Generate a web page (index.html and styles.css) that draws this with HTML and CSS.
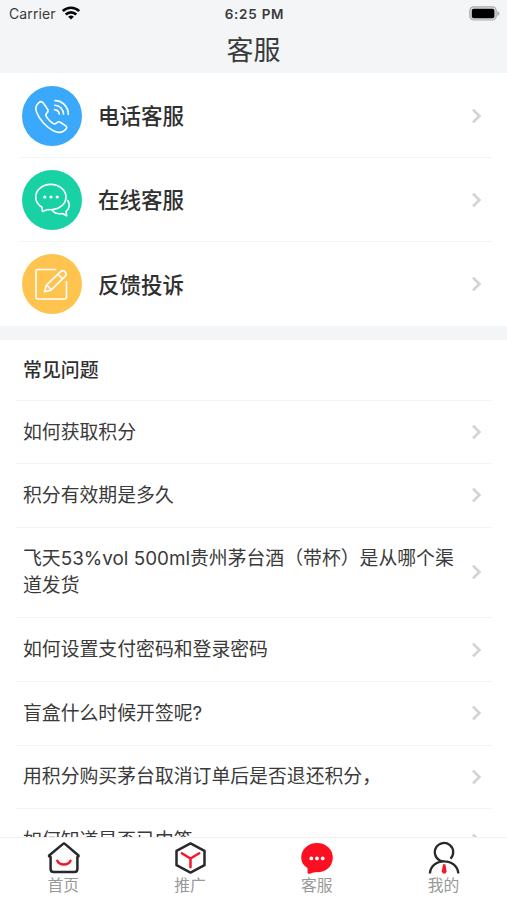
FILE: index.html
```html
<!DOCTYPE html>
<html lang="zh-CN">
<head>
<meta charset="utf-8">
<meta name="viewport" content="width=device-width, initial-scale=1">
<title>客服</title>
<link rel="stylesheet" href="styles.css">
</head>
<body>
<svg width="0" height="0" class="defs">
  <symbol id="chevron" viewBox="0 0 10 16"><path d="M1 1.600 7.400 8 1 14.400" fill="none" stroke="#d3d3d3" stroke-width="2.700"/></symbol>
</svg>
<div class="app">
  <header class="header">
    <div class="status">
      <div class="carrier"><span>Carrier</span>
        <svg class="wifi" viewBox="0 0 18 14" fill="none" stroke="#080808" stroke-width="2.600"><path d="M.8 5.100a11.700 11.700 0 0 1 16.400 0"/><path d="M3.700 8.500a7.600 7.600 0 0 1 10.600 0"/><path d="M9 13.600 6.100 10.800a4.200 4.200 0 0 1 5.800 0z" fill="#080808" stroke="none"/></svg>
      </div>
      <time class="time">6:25 PM</time>
      <svg class="battery" viewBox="0 0 31 15"><rect x=".8" y=".8" width="26.400" height="13.200" rx="3.800" fill="#d8d9da" stroke="#adadae" stroke-width="1.200"/><rect x="2.800" y="2.700" width="22.600" height="9.500" rx="2" fill="#000"/><path d="M28.400 5v5q2-.8 2-2.500T28.400 5" fill="#aaa"/></svg>
    </div>
    <h1 class="title">客服</h1>
  </header>
  <main class="content">
    <section class="services">
      <a class="service">
        <span class="badge blue"><svg viewBox="0 0 60 60"><path d="M17 16.600c1.600-1.500 3-1.300 4.200.3l4.400 6.300c1 1.600.5 2.800-1 4.100-1.300 1.200-1 2.300.4 4.300 2 2.800 4 4.600 6 5.800 1.800 1 2.900.5 3.900-.6 1.100-1.400 2.300-1.300 3.800-.3l5.100 3.400c1.200.9 1.200 2 .2 3.100-3 3.600-7.500 4.300-12.600 1.700C24.500 41.300 17.500 34 14.500 26c-1.500-4.100-.5-7 2.500-9.400z"/><path d="M33 14.600c7.500.1 13.200 6 13.300 13.800M32.800 19.200c5 .3 8.600 4 8.800 9M32.500 23.600c2.700.3 4.500 2 4.800 4.600"/></svg></span>
        <span class="name">电话客服</span><svg class="chevron"><use href="#chevron"/></svg>
      </a>
      <a class="service">
        <span class="badge green"><svg viewBox="0 0 60 60"><path d="M20.500 41.400 20 37.300C16 34.900 13.700 31.300 13.700 27c0-7 6.600-12.600 15-12.600S44 20 44 27s-6.700 12.700-15.300 12.700l-2.700-.2z"/><path d="M45.800 30.500c2.200 3.600 1.700 8-1.800 11.200l.7 4-4.200-2.200c-4.100.8-7.900-.2-10.100-2.900"/><g fill="#fff" stroke="none"><circle cx="22.800" cy="27" r="1.600"/><circle cx="29" cy="27" r="1.600"/><circle cx="35.200" cy="27" r="1.600"/></g></svg></span>
        <span class="name">在线客服</span><svg class="chevron"><use href="#chevron"/></svg>
      </a>
      <a class="service">
        <span class="badge yellow"><svg viewBox="0 0 60 60"><path d="M33.500 15.500H16q-2 0-2 2V43q0 2 2 2h26.500q2 0 2-2V27.500"/><path d="m22.500 37.700 1.900-6.600 14-13.300c1.600-1.500 3.200-1.400 4.700.1 1.600 1.600 1.500 3 0 4.500L29 36.100zM35.900 20.200l4.800 4.700M25 31l4.200 4.700"/></svg></span>
        <span class="name">反馈投诉</span><svg class="chevron"><use href="#chevron"/></svg>
      </a>
    </section>
    <section class="faq">
      <h2 class="faq-title">常见问题</h2>
      <a class="question"><span>如何获取积分</span><svg class="chevron"><use href="#chevron"/></svg></a>
      <a class="question"><span>积分有效期是多久</span><svg class="chevron"><use href="#chevron"/></svg></a>
      <a class="question"><span>飞天53%vol 500ml贵州茅台酒（带杯）是从哪个渠道发货</span><svg class="chevron"><use href="#chevron"/></svg></a>
      <a class="question"><span>如何设置支付密码和登录密码</span><svg class="chevron"><use href="#chevron"/></svg></a>
      <a class="question"><span>盲盒什么时候开签呢?</span><svg class="chevron"><use href="#chevron"/></svg></a>
      <a class="question"><span>用积分购买茅台取消订单后是否退还积分，</span><svg class="chevron"><use href="#chevron"/></svg></a>
      <a class="question"><span>如何知道是否已中签</span><svg class="chevron"><use href="#chevron"/></svg></a>
    </section>
  </main>
  <nav class="tabs">
    <a class="tab"><svg viewBox="0 0 34 34"><path d="M4.600 16v12q0 3 3 3h20.800q3 0 3-3V16l1-.6q.4-.6-.2-1.200L19.200 3.100q-1.200-1.100-2.400 0L3.400 14.200q-.6.600-.2 1.200z" fill="none" stroke="#29292b" stroke-width="2.500" stroke-linejoin="round"/><path d="M11.300 19.700c2.200 5 11 5 13.200 0" fill="none" stroke="#f5162b" stroke-width="2.400" stroke-linecap="round"/></svg><span>首页</span></a>
    <a class="tab"><svg viewBox="0 0 34 34" fill="none" stroke-width="2.500" stroke-linejoin="round"><path d="M17.500 2.400 31.500 9.800v14.400l-14 7.400-14-7.400V9.800z" stroke="#29292b"/><path d="m8.800 12.300 8.700 5.200 8.700-5.200M17.500 17.500v8.700" stroke="#f5162b" stroke-linecap="round"/></svg><span>推广</span></a>
    <a class="tab"><svg viewBox="0 0 34 34"><path d="M17 1.900c9 0 15.800 6.200 15.800 14.500 0 9-7 14.800-15.800 14.800-2.200 0-4 .1-5.800 1-1.600.9-3.800.8-3.700-.8l.1-4.200C3.400 24.800 1.200 21.200 1.200 16.600 1.200 8.200 8.200 1.900 17 1.900z" fill="#fb0f20"/><g fill="#fff"><circle cx="11.300" cy="17.400" r="1.900"/><circle cx="17" cy="17.400" r="1.900"/><circle cx="22.700" cy="17.400" r="1.900"/></g></svg><span>客服</span></a>
    <a class="tab"><svg viewBox="0 0 34 34"><path d="M23.500 17.700A9.200 9.200 0 1 0 12.500 19.200q2.100 1.100 4.900 1.100M2.900 32.500c.5-7.500 6.500-12.100 14.200-12.100s13.700 4.600 14.200 12.100" fill="none" stroke="#29292b" stroke-width="2.300"/><path d="M16 23.200h2.400l1.200 7.100-1.100 2.200h-2.600l-1.100-2.200z" fill="#f5162b"/></svg><span>我的</span></a>
  </nav>
</div>
</body>
</html>
```
FILE: styles.css
```css
* { box-sizing: border-box; }
body { margin: 0; font-family: Inter, "Noto Sans CJK SC", sans-serif; color: #3a3a3a; background: #fff; }
.defs { display: none; }
.app { height: 900px; display: flex; flex-direction: column; overflow: hidden; }
.header { height: 73px; flex: none; background: #f4f5f7; }
.status { height: 27px; padding: 0 7px 0 9px; display: grid; grid-template-columns: 1fr auto 1fr; align-items: center; font-size: 14px; line-height: 26px; }
.carrier { display: flex; align-items: center; gap: 6px; letter-spacing: .1px; }
.wifi { width: 18px; height: 14px; margin-top: -1px; }
.time { font-weight: 600; font-size: 13.500px; letter-spacing: .75px; }
.battery { width: 31px; height: 15px; justify-self: end; margin-top: -1px; }
.title { margin: 0; padding-top: 2px; text-align: center; font-weight: 400; font-size: 27px; line-height: 44px; }
.content { flex: 1; min-height: 0; overflow: hidden; }
.services { height: 267px; padding-top: 1px; border-bottom: 14px solid #f4f5f6; }
.service { height: 84.200px; margin: 0 15px 0 20px; padding: 0 10px 0 2px; display: flex; align-items: center; border-bottom: 1px solid #f3f3f3; }
.service:last-child { border-bottom: 0; }
.badge { width: 60px; height: 60px; border-radius: 50%; flex: none; }
.badge svg { display: block; fill: none; stroke: #fff; stroke-width: 1.600; stroke-linejoin: round; stroke-linecap: round; }
.blue { background: #3aa9fb; }
.green { background: #18d2a6; }
.yellow { background: #ffc34f; }
.name { flex: 1; margin-left: 16px; padding-top: 1px; font-size: 21.500px; font-weight: 500; line-height: 30px; color: #303030; }
.chevron { width: 10px; height: 16px; flex: none; }
.faq { padding: 0 15px 0 16px; }
.faq-title { height: 61.300px; margin: 0; padding-left: 7px; border-bottom: 1px solid #f3f3f3; font-size: 18.900px; font-weight: 500; line-height: 61px; color: #303030; }
.question { min-height: 63.400px; padding: 17.700px 10px 18px 7px; display: flex; align-items: center; justify-content: space-between; border-bottom: 1px solid #f3f3f3; font-size: 18.850px; line-height: 27px; }
.question:nth-of-type(1) { min-height: 62.700px; padding-bottom: 17px; }
.question span { width: 436px; }
.tabs { height: 63px; flex: none; display: grid; grid-template-columns: repeat(4, 1fr); border-top: 1px solid #f1f1f1; background: #fff; }
.tab { display: flex; flex-direction: column; align-items: center; padding-top: 3px; font-size: 15.800px; line-height: 22px; color: #999; }
.tab svg { width: 34px; height: 34px; flex: none; }
```
